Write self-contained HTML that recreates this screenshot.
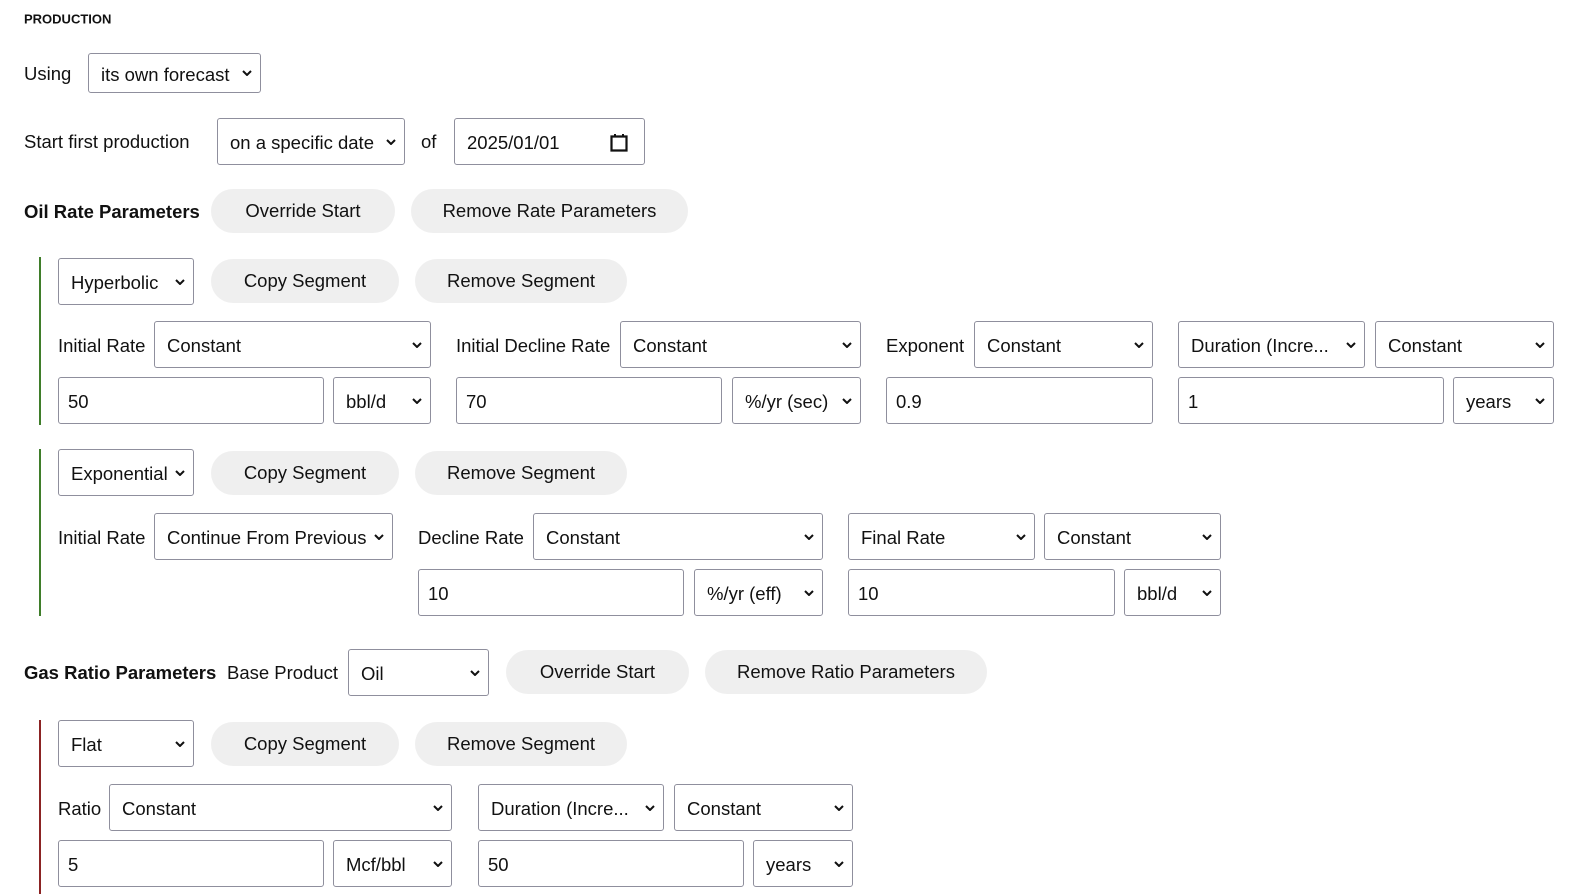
<!DOCTYPE html>
<html><head><meta charset="utf-8"><style>
html{overflow:hidden}
body{margin:0;width:1571px;height:894px;background:#fff;position:relative;overflow:hidden;font-family:"Liberation Sans",sans-serif;font-size:18.5px;color:#111}
.a{position:absolute;white-space:nowrap}
.t{position:absolute;white-space:nowrap;transform:translateY(-50%)}
.b{font-weight:bold}
.s,.i{position:absolute;box-sizing:border-box;border:1px solid #8f8f9d;border-radius:3px;background:#fff;padding-left:12px;padding-top:3px;display:flex;align-items:center;white-space:nowrap;overflow:hidden}
.i{padding-left:9px}
.s svg{position:absolute;right:8px;top:50%;margin-top:-3px}
.btn{position:absolute;background:#efefef;border-radius:22px;height:44px;display:flex;align-items:center;justify-content:center;white-space:nowrap}
.vl{position:absolute;width:2px}
</style></head><body>
<div class="t b" style="left:24px;top:19px;font-size:13px">PRODUCTION</div>
<div class="t" style="left:24px;top:74px">Using</div>
<div class="s" style="left:88px;top:53px;width:173px;height:40px">its own forecast<svg width="10" height="6"><path d="M1 1l4 4 4-4" stroke="#111" stroke-width="2" fill="none"/></svg></div>
<div class="t" style="left:24px;top:142px">Start first production</div>
<div class="s" style="left:217px;top:118px;width:188px;height:47px">on a specific date<svg width="10" height="6"><path d="M1 1l4 4 4-4" stroke="#111" stroke-width="2" fill="none"/></svg></div>
<div class="t" style="left:421px;top:142px">of</div>
<div class="i" style="left:454px;top:118px;width:191px;height:47px;padding-left:12px">2025/01/01<svg style="position:absolute;right:16px;top:14px" width="18" height="19"><path d="M1.5 3.5h15v14h-15z" stroke="#111" stroke-width="2.2" fill="none"/><path d="M5 1v3M13 1v3" stroke="#111" stroke-width="2"/></svg></div>

<div class="t b" style="left:24px;top:212px">Oil Rate Parameters</div>
<div class="btn" style="left:211px;top:189px;width:184px">Override Start</div>
<div class="btn" style="left:411px;top:189px;width:277px">Remove Rate Parameters</div>

<div class="vl" style="left:39px;top:257px;height:168px;background:#3f7d2a"></div>
<div class="s" style="left:58px;top:258px;width:136px;height:47px">Hyperbolic<svg width="10" height="6"><path d="M1 1l4 4 4-4" stroke="#111" stroke-width="2" fill="none"/></svg></div>
<div class="btn" style="left:211px;top:259px;width:188px">Copy Segment</div>
<div class="btn" style="left:415px;top:259px;width:212px">Remove Segment</div>

<div class="t" style="left:58px;top:346px">Initial Rate</div>
<div class="s" style="left:154px;top:321px;width:277px;height:47px">Constant<svg width="10" height="6"><path d="M1 1l4 4 4-4" stroke="#111" stroke-width="2" fill="none"/></svg></div>
<div class="t" style="left:456px;top:346px">Initial Decline Rate</div>
<div class="s" style="left:620px;top:321px;width:241px;height:47px">Constant<svg width="10" height="6"><path d="M1 1l4 4 4-4" stroke="#111" stroke-width="2" fill="none"/></svg></div>
<div class="t" style="left:886px;top:346px">Exponent</div>
<div class="s" style="left:974px;top:321px;width:179px;height:47px">Constant<svg width="10" height="6"><path d="M1 1l4 4 4-4" stroke="#111" stroke-width="2" fill="none"/></svg></div>
<div class="s" style="left:1178px;top:321px;width:187px;height:47px">Duration (Incre...<svg width="10" height="6"><path d="M1 1l4 4 4-4" stroke="#111" stroke-width="2" fill="none"/></svg></div>
<div class="s" style="left:1375px;top:321px;width:179px;height:47px">Constant<svg width="10" height="6"><path d="M1 1l4 4 4-4" stroke="#111" stroke-width="2" fill="none"/></svg></div>

<div class="i" style="left:58px;top:377px;width:266px;height:47px">50</div>
<div class="s" style="left:333px;top:377px;width:98px;height:47px">bbl/d<svg width="10" height="6"><path d="M1 1l4 4 4-4" stroke="#111" stroke-width="2" fill="none"/></svg></div>
<div class="i" style="left:456px;top:377px;width:266px;height:47px">70</div>
<div class="s" style="left:732px;top:377px;width:129px;height:47px">%/yr (sec)<svg width="10" height="6"><path d="M1 1l4 4 4-4" stroke="#111" stroke-width="2" fill="none"/></svg></div>
<div class="i" style="left:886px;top:377px;width:267px;height:47px">0.9</div>
<div class="i" style="left:1178px;top:377px;width:266px;height:47px">1</div>
<div class="s" style="left:1453px;top:377px;width:101px;height:47px">years<svg width="10" height="6"><path d="M1 1l4 4 4-4" stroke="#111" stroke-width="2" fill="none"/></svg></div>

<div class="vl" style="left:39px;top:449px;height:167px;background:#3f7d2a"></div>
<div class="s" style="left:58px;top:449px;width:136px;height:47px">Exponential<svg width="10" height="6"><path d="M1 1l4 4 4-4" stroke="#111" stroke-width="2" fill="none"/></svg></div>
<div class="btn" style="left:211px;top:451px;width:188px">Copy Segment</div>
<div class="btn" style="left:415px;top:451px;width:212px">Remove Segment</div>

<div class="t" style="left:58px;top:538px">Initial Rate</div>
<div class="s" style="left:154px;top:513px;width:239px;height:47px">Continue From Previous<svg width="10" height="6"><path d="M1 1l4 4 4-4" stroke="#111" stroke-width="2" fill="none"/></svg></div>
<div class="t" style="left:418px;top:538px">Decline Rate</div>
<div class="s" style="left:533px;top:513px;width:290px;height:47px">Constant<svg width="10" height="6"><path d="M1 1l4 4 4-4" stroke="#111" stroke-width="2" fill="none"/></svg></div>
<div class="s" style="left:848px;top:513px;width:187px;height:47px">Final Rate<svg width="10" height="6"><path d="M1 1l4 4 4-4" stroke="#111" stroke-width="2" fill="none"/></svg></div>
<div class="s" style="left:1044px;top:513px;width:177px;height:47px">Constant<svg width="10" height="6"><path d="M1 1l4 4 4-4" stroke="#111" stroke-width="2" fill="none"/></svg></div>
<div class="i" style="left:418px;top:569px;width:266px;height:47px">10</div>
<div class="s" style="left:694px;top:569px;width:129px;height:47px">%/yr (eff)<svg width="10" height="6"><path d="M1 1l4 4 4-4" stroke="#111" stroke-width="2" fill="none"/></svg></div>
<div class="i" style="left:848px;top:569px;width:267px;height:47px">10</div>
<div class="s" style="left:1124px;top:569px;width:97px;height:47px">bbl/d<svg width="10" height="6"><path d="M1 1l4 4 4-4" stroke="#111" stroke-width="2" fill="none"/></svg></div>

<div class="t b" style="left:24px;top:673px">Gas Ratio Parameters</div>
<div class="t" style="left:227px;top:673px">Base Product</div>
<div class="s" style="left:348px;top:649px;width:141px;height:47px">Oil<svg width="10" height="6"><path d="M1 1l4 4 4-4" stroke="#111" stroke-width="2" fill="none"/></svg></div>
<div class="btn" style="left:506px;top:650px;width:183px">Override Start</div>
<div class="btn" style="left:705px;top:650px;width:282px">Remove Ratio Parameters</div>

<div class="vl" style="left:39px;top:720px;height:174px;background:#8b2323"></div>
<div class="s" style="left:58px;top:720px;width:136px;height:47px">Flat<svg width="10" height="6"><path d="M1 1l4 4 4-4" stroke="#111" stroke-width="2" fill="none"/></svg></div>
<div class="btn" style="left:211px;top:722px;width:188px">Copy Segment</div>
<div class="btn" style="left:415px;top:722px;width:212px">Remove Segment</div>

<div class="t" style="left:58px;top:809px">Ratio</div>
<div class="s" style="left:109px;top:784px;width:343px;height:47px">Constant<svg width="10" height="6"><path d="M1 1l4 4 4-4" stroke="#111" stroke-width="2" fill="none"/></svg></div>
<div class="s" style="left:478px;top:784px;width:186px;height:47px">Duration (Incre...<svg width="10" height="6"><path d="M1 1l4 4 4-4" stroke="#111" stroke-width="2" fill="none"/></svg></div>
<div class="s" style="left:674px;top:784px;width:179px;height:47px">Constant<svg width="10" height="6"><path d="M1 1l4 4 4-4" stroke="#111" stroke-width="2" fill="none"/></svg></div>
<div class="i" style="left:58px;top:840px;width:266px;height:47px">5</div>
<div class="s" style="left:333px;top:840px;width:119px;height:47px">Mcf/bbl<svg width="10" height="6"><path d="M1 1l4 4 4-4" stroke="#111" stroke-width="2" fill="none"/></svg></div>
<div class="i" style="left:478px;top:840px;width:266px;height:47px">50</div>
<div class="s" style="left:753px;top:840px;width:100px;height:47px">years<svg width="10" height="6"><path d="M1 1l4 4 4-4" stroke="#111" stroke-width="2" fill="none"/></svg></div>
</body></html>
